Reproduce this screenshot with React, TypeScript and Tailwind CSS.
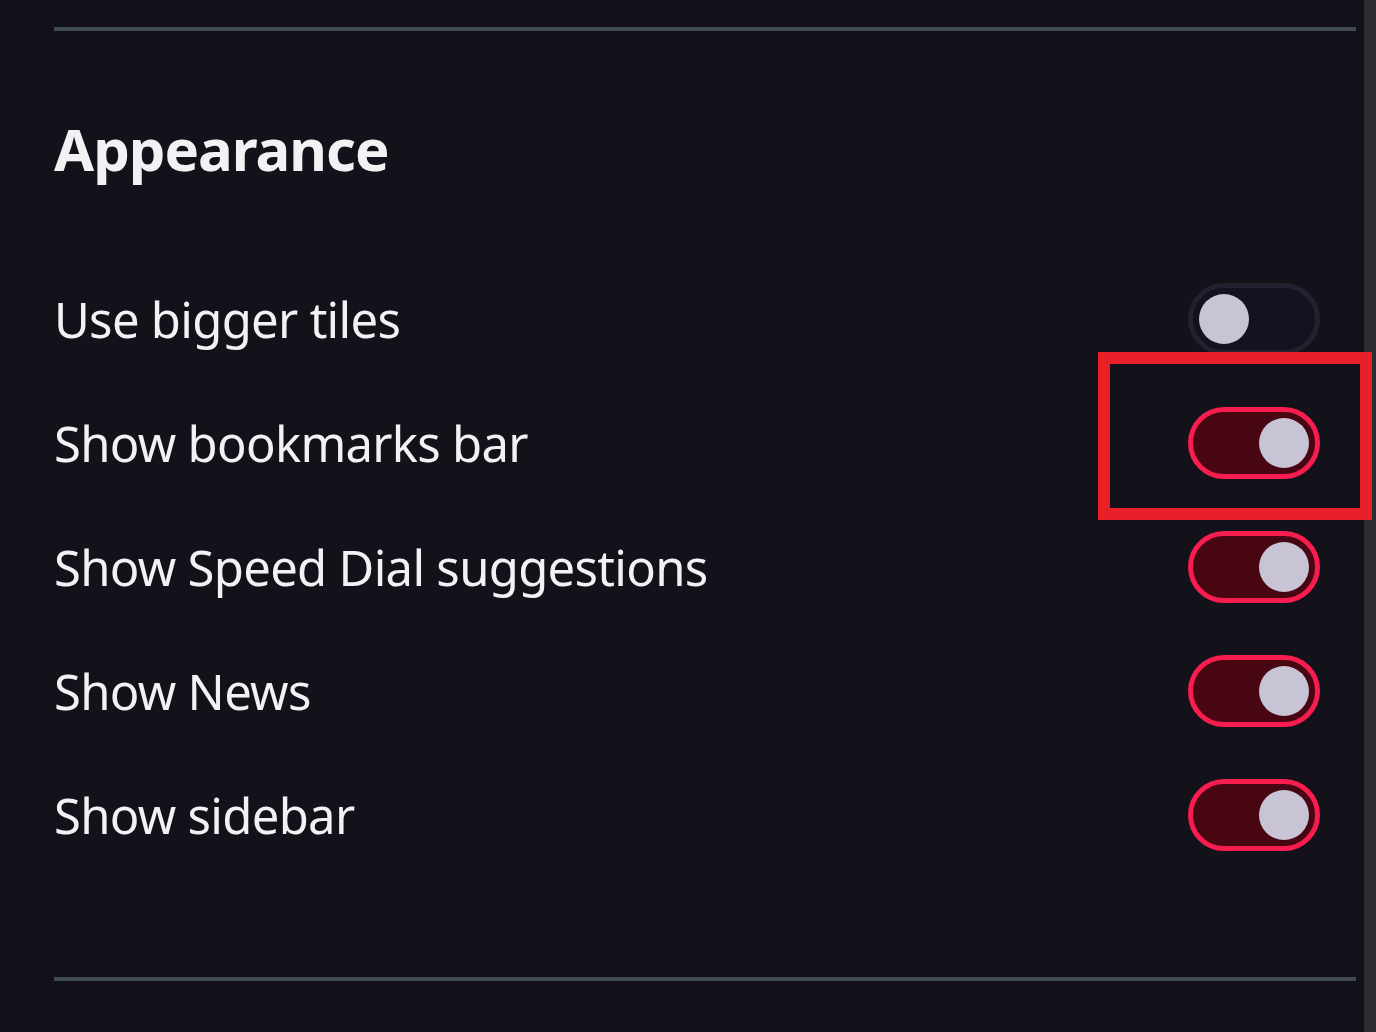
import React, { useState } from "react";

const rows = [
  { label: "Use bigger tiles", on: false },
  { label: "Show bookmarks bar", on: true },
  { label: "Show Speed Dial suggestions", on: true },
  { label: "Show News", on: true },
  { label: "Show sidebar", on: true },
];

function Toggle({ on, onClick }: { on: boolean; onClick: () => void }) {
  return (
    <button
      onClick={onClick}
      className={`relative flex h-[72px] w-[132px] shrink-0 items-center rounded-full border-[5px] px-[6px] cursor-pointer ${
        on ? "border-[#f81d4f] bg-[#470611] justify-end" : "border-[#23212f] bg-[#15121f] justify-start"
      }`}
    >
      <span className="block h-[50px] w-[50px] rounded-full bg-[#c8c4d6]" />
    </button>
  );
}

export default function App() {
  const [state, setState] = useState(rows.map(r => r.on));

  return (
    <div className="relative flex h-[1032px] w-[1376px] overflow-hidden bg-[#13111a] font-['Noto_Sans',sans-serif] text-[#f2f2f4]">
      <div className="flex flex-1 flex-col pl-[54px] pr-[8px]">
        <div className="mt-[27px] h-[4px] bg-[#3f4a52]" />

        <h2 className="mt-[78px] text-[58px] font-bold leading-[80px] tracking-[-1px]">Appearance</h2>

        <div className="mt-[68px] flex flex-col">
          {rows.map((r, i) => (
            <div key={r.label} className="flex h-[124px] items-center justify-between pr-[36px]">
              <span className="text-[49px] leading-none tracking-[-0.7px]">{r.label}</span>
              <Toggle on={state[i]} onClick={() => setState(s => s.map((v, j) => (j === i ? !v : v)))} />
            </div>
          ))}
        </div>

        <div className="mt-auto mb-[51px] h-[4px] bg-[#3f4a52]" />
      </div>

      {/* scrollbar track */}
      <div className="w-[12px] bg-[#2c2b31]" />

      {/* highlight annotation */}
      <div className="absolute left-[1098px] top-[352px] h-[168px] w-[274px] border-[12px] border-[#e8202a]" />
    </div>
  );
}
